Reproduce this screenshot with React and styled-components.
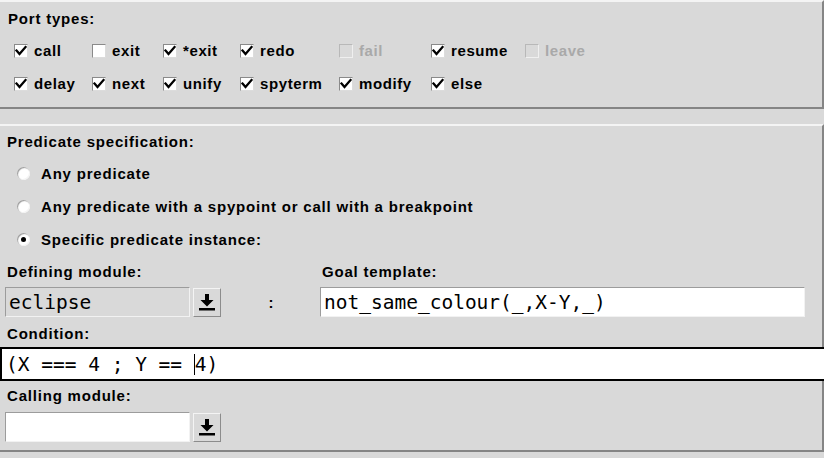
import React from 'react';
import styled, { createGlobalStyle } from 'styled-components';

const GlobalStyle = createGlobalStyle`
    html, body {
        margin: 0;
        padding: 0;
        background: #d9d9d9;
    }
    body {
        font-family: "Liberation Sans", Arial, sans-serif;
        width: 824px;
        height: 458px;
        overflow: hidden;
    }
`

const Window = styled.div`
    width: 824px;
    height: 458px;
    background: #d9d9d9;
    display: flex;
    flex-direction: column;
`

const Panel = styled.div`
    width: 822px;
    background: #d9d9d9;
    border-top: 2px solid #f4f4f4;
    border-right: 2px solid #858585;
    border-bottom: 2px solid #858585;
    display: flex;
    flex-direction: column;
`

const Spacer = styled.div`
    height: ${p => p.h}px;
    flex-shrink: 0;
`

const Label = styled.div`
    height: ${p => p.h || 30}px;
    display: flex;
    align-items: center;
    padding-left: ${p => p.left ?? 7}px;
    font-weight: bold;
    font-size: 15px;
    letter-spacing: 0.8px;
    color: #000;
    white-space: nowrap;
`

const CheckGrid = styled.div`
    display: grid;
    grid-template-columns: 78px 71px 77px 99px 92px 94px auto;
    grid-auto-rows: 33px;
    padding-left: 14px;
`

const CheckItem = styled.label`
    display: flex;
    align-items: center;
    gap: 6px;
    font-weight: bold;
    font-size: 15px;
    letter-spacing: 0.6px;
    color: ${p => p.disabled ? '#a9a9a9' : '#000'};
    white-space: nowrap;
`

const Box = styled.span`
    width: 14px;
    height: 14px;
    box-sizing: border-box;
    background: ${p => p.disabled ? '#d9d9d9' : '#fff'};
    border-top: 1px solid ${p => p.disabled ? '#b8b8b8' : '#8a8a8a'};
    border-left: 1px solid ${p => p.disabled ? '#b8b8b8' : '#8a8a8a'};
    border-bottom: 1px solid ${p => p.disabled ? '#efefef' : '#dcdcdc'};
    border-right: 1px solid ${p => p.disabled ? '#efefef' : '#dcdcdc'};
    display: flex;
    align-items: center;
    justify-content: center;
    flex-shrink: 0;
`

const RadioRow = styled.label`
    height: 33px;
    display: flex;
    align-items: center;
    gap: 11px;
    padding-left: 17px;
    font-weight: bold;
    font-size: 15px;
    letter-spacing: 0.8px;
    white-space: nowrap;
`

const RadioCircle = styled.span`
    width: 13px;
    height: 13px;
    border-radius: 50%;
    box-sizing: border-box;
    background: #fff;
    box-shadow: inset 1px 1px 1px #9a9a9a, inset -1px -1px 0 #f4f4f4;
    display: flex;
    align-items: center;
    justify-content: center;
    &::after {
        content: '';
        width: 5px;
        height: 5px;
        border-radius: 50%;
        background: ${p => p.checked ? '#000' : 'transparent'};
    }
`

const FieldGrid = styled.div`
    display: grid;
    grid-template-columns: 219px 96px 485px;
    grid-template-rows: 29px 34px;
    padding-left: 5px;
`

const ComboRow = styled.div`
    display: flex;
    align-items: center;
    gap: 3px;
`

const Entry = styled.div`
    width: ${p => p.w}px;
    height: 30px;
    box-sizing: border-box;
    background: ${p => p.gray ? '#d9d9d9' : '#fff'};
    border-top: 1px solid #9c9c9c;
    border-left: 1px solid #9c9c9c;
    border-bottom: 1px solid #f2f2f2;
    border-right: 1px solid #f2f2f2;
    font-family: "DejaVu Sans Mono", "Liberation Mono", monospace;
    font-size: 19.5px;
    color: #000;
    display: flex;
    align-items: center;
    padding-left: 3px;
    white-space: nowrap;
    overflow: hidden;
`

const DropButton = styled.button`
    width: 28px;
    height: 29px;
    padding: 0;
    box-sizing: border-box;
    background: #d9d9d9;
    border-top: 1px solid #f4f4f4;
    border-left: 1px solid #f4f4f4;
    border-bottom: 1px solid #8c8c8c;
    border-right: 1px solid #8c8c8c;
    display: flex;
    align-items: center;
    justify-content: center;
`

const Colon = styled.div`
    display: flex;
    align-items: center;
    justify-content: center;
    padding-right: 2px;
    font-weight: bold;
    font-size: 15px;
`

const ConditionEntry = styled.div`
    height: 34px;
    margin: 0 -4px 0 0;
    box-sizing: border-box;
    background: #fff;
    border: 2px solid #000;
    font-family: "DejaVu Sans Mono", "Liberation Mono", monospace;
    font-size: 19.5px;
    display: flex;
    align-items: center;
    padding-left: 4px;
    white-space: pre;
`

const Caret = styled.span`
    display: inline-block;
    width: 0;
    height: 21px;
    border-left: 1.5px solid #000;
    vertical-align: middle;
`

const CallingRow = styled(ComboRow)`
    height: 36px;
    padding-left: 5px;
`

const BottomStrip = styled.div`
    flex: 1;
    background: #d9d9d9;
`

const Check = () => (
    <svg width="12" height="12" viewBox="0 0 12 12">
        <path d="M1.5 5.5 L4.5 9 L10.5 2" fill="none" stroke="#000" strokeWidth="2.3" strokeLinecap="square" />
    </svg>
)

const DownIcon = () => (
    <svg width="18" height="18" viewBox="0 0 18 18">
        <path d="M7 1 H11 V7 H15.5 L9 13.5 L2.5 7 H7 Z" fill="#000" />
        <rect x="1" y="15" width="16" height="2.5" fill="#000" />
    </svg>
)

const ports = [
    { name: 'call', on: true },
    { name: 'exit', on: false },
    { name: '*exit', on: true },
    { name: 'redo', on: true },
    { name: 'fail', on: false, disabled: true },
    { name: 'resume', on: true },
    { name: 'leave', on: false, disabled: true },
    { name: 'delay', on: true },
    { name: 'next', on: true },
    { name: 'unify', on: true },
    { name: 'spyterm', on: true },
    { name: 'modify', on: true },
    { name: 'else', on: true },
]

const radios = [
    { text: 'Any predicate', checked: false },
    { text: 'Any predicate with a spypoint or call with a breakpoint', checked: false },
    { text: 'Specific predicate instance:', checked: true },
]

const App = () => {
    return (
        <Window>
            <GlobalStyle />
            <Panel>
                <Label h={32} left={8}>Port types:</Label>
                <CheckGrid>
                    {ports.map(p => (
                        <CheckItem key={p.name} disabled={p.disabled}>
                            <Box disabled={p.disabled}>{p.on && <Check />}</Box>
                            {p.name}
                        </CheckItem>
                    ))}
                </CheckGrid>
                <Spacer h={7} />
            </Panel>
            <Spacer h={15} />
            <Panel>
                <Label h={31}>Predicate specification:</Label>
                {radios.map(r => (
                    <RadioRow key={r.text}>
                        <RadioCircle checked={r.checked} />
                        {r.text}
                    </RadioRow>
                ))}
                <FieldGrid>
                    <Label left={2}>Defining module:</Label>
                    <div />
                    <Label left={2}>Goal template:</Label>
                    <ComboRow>
                        <Entry w={185} gray>eclipse</Entry>
                        <DropButton><DownIcon /></DropButton>
                    </ComboRow>
                    <Colon>:</Colon>
                    <ComboRow>
                        <Entry w={485}>not_same_colour(_,X-Y,_)</Entry>
                    </ComboRow>
                </FieldGrid>
                <Label h={28}>Condition:</Label>
                <ConditionEntry>(X === 4 ; Y == <Caret />4)</ConditionEntry>
                <Label h={28}>Calling module:</Label>
                <CallingRow>
                    <Entry w={185} />
                    <DropButton><DownIcon /></DropButton>
                </CallingRow>
                <Spacer h={5} />
            </Panel>
            <BottomStrip />
        </Window>
    )
}

export default App
